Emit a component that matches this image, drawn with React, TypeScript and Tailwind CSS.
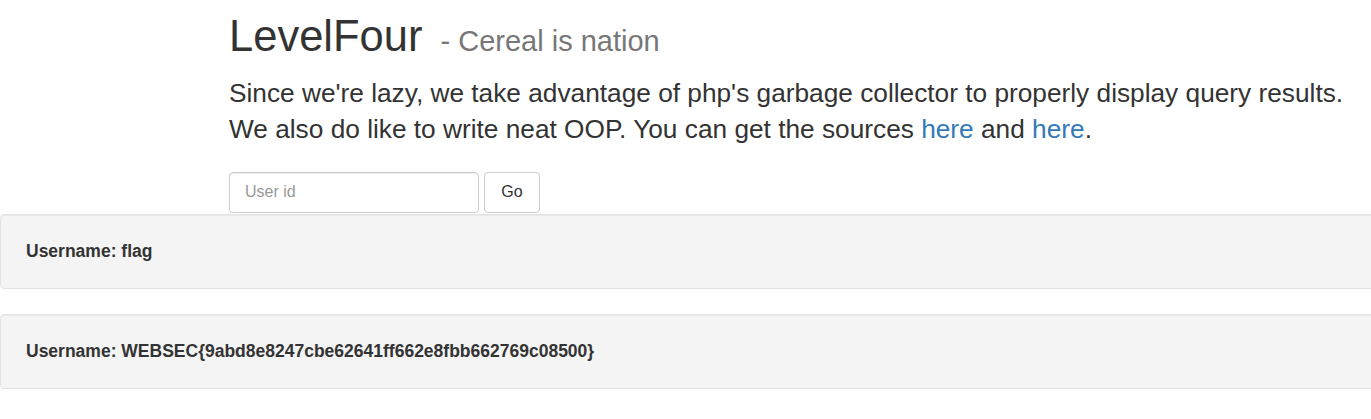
export default function App() {
  return (
    <div className="w-[1371px] h-[419px] overflow-hidden bg-white text-[#333] font-['Liberation_Sans',Arial,sans-serif]">
      <div className="pl-[229px] pt-[13px]">
        <h1 className="text-[43.5px] leading-[1.1] text-[#333]">
          LevelFour{" "}
          <small className="ml-[6px] text-[29px] text-[#777]">- Cereal is nation</small>
        </h1>
        <p className="mt-[14px] text-[26.25px] leading-[36px]">
          Since we're lazy, we take advantage of php's garbage collector to properly display query results.
          <br />
          We also do like to write neat OOP. You can get the sources{" "}
          <a href="#" className="text-[#337ab7]">here</a> and{" "}
          <a href="#" className="text-[#337ab7]">here</a>.
        </p>
        <form className="mt-[25px] flex gap-[5px]">
          <input
            type="text"
            placeholder="User id"
            className="w-[250px] h-[41px] px-[15px] text-[16px] border border-[#ccc] rounded-[4px] shadow-[inset_0_1px_1px_rgba(0,0,0,0.075)] placeholder:text-[#999] outline-none"
          />
          <button
            type="button"
            className="w-[56px] h-[41px] text-[16px] border border-[#ccc] rounded-[4px] bg-white text-[#333]"
          >
            Go
          </button>
        </form>
      </div>
      <div className="mt-[1px] w-[1400px] flex flex-col gap-[25px]">
        <div className="h-[75px] flex items-center px-[25px] bg-[#f4f4f4] border border-[#e3e3e3] rounded-[4px] shadow-[inset_0_1px_1px_rgba(0,0,0,0.05)]">
          <b className="text-[17.5px]">Username: flag</b>
        </div>
        <div className="h-[75px] flex items-center px-[25px] bg-[#f4f4f4] border border-[#e3e3e3] rounded-[4px] shadow-[inset_0_1px_1px_rgba(0,0,0,0.05)]">
          <b className="text-[17.5px]">Username: WEBSEC{"{"}9abd8e8247cbe62641ff662e8fbb662769c08500{"}"}</b>
        </div>
      </div>
    </div>
  );
}
